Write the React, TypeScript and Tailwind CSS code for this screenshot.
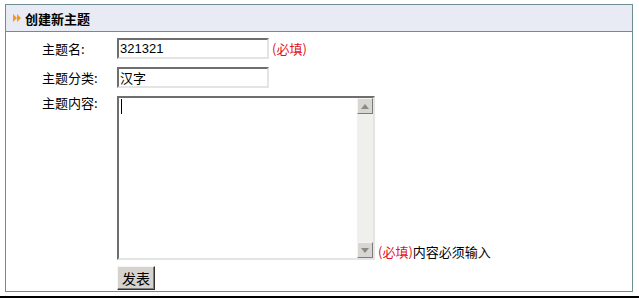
import React from "react";

const cjk = { fontFamily: '"Noto Sans CJK SC", "Liberation Sans", sans-serif' };

function ScrollBtn({ up }: { up: boolean }) {
  return (
    <div className="w-[16px] h-[16px] bg-[#d8d6d0] border border-t-[#f4f4f4] border-l-[#f4f4f4] border-r-[#7c7c7c] border-b-[#7c7c7c] flex items-center justify-center">
      <svg width="8" height="5" viewBox="0 0 8 5">
        {up ? <polygon points="4,0 8,5 0,5" fill="#8a8a8a" /> : <polygon points="0,0 8,0 4,5" fill="#8a8a8a" />}
      </svg>
    </div>
  );
}

export default function App() {
  return (
    <div className="w-[639px] h-[299px] bg-white relative overflow-hidden" style={cjk}>
      <div className="pt-[4px] pl-[5px] pr-[6px]">
        <div className="h-[288px] border border-[#6f8e93] flex flex-col">
          <div className="h-[27px] bg-[#e8ebf4] border-b border-[#6f8e93] flex items-center pl-[7px] gap-[4px]">
            <svg width="8" height="8" viewBox="0 0 8 8">
              <polygon points="0,0 4,4 0,8" fill="#f29a1f" />
              <polygon points="4,0 8,4 4,8" fill="#f29a1f" />
            </svg>
            <span className="text-[13px] font-bold text-black leading-none">创建新主题</span>
          </div>
          <div className="pl-[36px] pt-[6px] flex flex-col gap-[8px] text-[13px] text-black">
            <div className="flex items-center h-[21px]">
              <div className="w-[75px]">主题名:</div>
              <div className="w-[152px] h-[21px] border-2 border-t-[#6e6e6e] border-l-[#6e6e6e] border-r-[#e4e4e4] border-b-[#e4e4e4] bg-white flex items-center pl-[1px] text-[13px]" style={{ fontFamily: '"Liberation Sans", sans-serif' }}>
                321321
              </div>
              <span className="ml-[3px] text-[#e2101c]">(必填)</span>
            </div>
            <div className="flex items-center h-[21px]">
              <div className="w-[75px]">主题分类:</div>
              <div className="w-[152px] h-[21px] border-2 border-t-[#6e6e6e] border-l-[#6e6e6e] border-r-[#e4e4e4] border-b-[#e4e4e4] bg-white flex items-center pl-[1px]">
                汉字
              </div>
            </div>
            <div className="flex">
              <div className="w-[75px] leading-[13px]">主题内容:</div>
              <div className="flex flex-col gap-[6px]">
                <div className="flex items-end">
                  <div className="w-[258px] h-[164px] border-2 border-t-[#6e6e6e] border-l-[#6e6e6e] border-r-[#e4e4e4] border-b-[#e4e4e4] bg-white flex">
                    <div className="flex-1 pl-[2px] pt-[1px]">
                      <div className="w-[1px] h-[15px] bg-black" />
                    </div>
                    <div className="w-[16px] flex flex-col bg-[#efefed]">
                      <ScrollBtn up />
                      <div className="flex-1" />
                      <ScrollBtn up={false} />
                    </div>
                  </div>
                  <div className="ml-[3px] mb-[1px] leading-[14px] whitespace-nowrap">
                    <span className="text-[#e2101c]">(必填)</span>
                    <span>内容必须输入</span>
                  </div>
                </div>
                <button className="w-[38px] h-[24px] bg-[#d6d3ce] border border-t-[#f6f6f6] border-l-[#f6f6f6] border-r-[#303030] border-b-[#303030] shadow-[inset_-1px_-1px_0_#808080] text-[14px] leading-none flex items-center justify-center text-black">
                  发表
                </button>
              </div>
            </div>
          </div>
        </div>
      </div>
      <div className="absolute left-0 right-0 top-[296px] h-[2px] bg-black" />
    </div>
  );
}
